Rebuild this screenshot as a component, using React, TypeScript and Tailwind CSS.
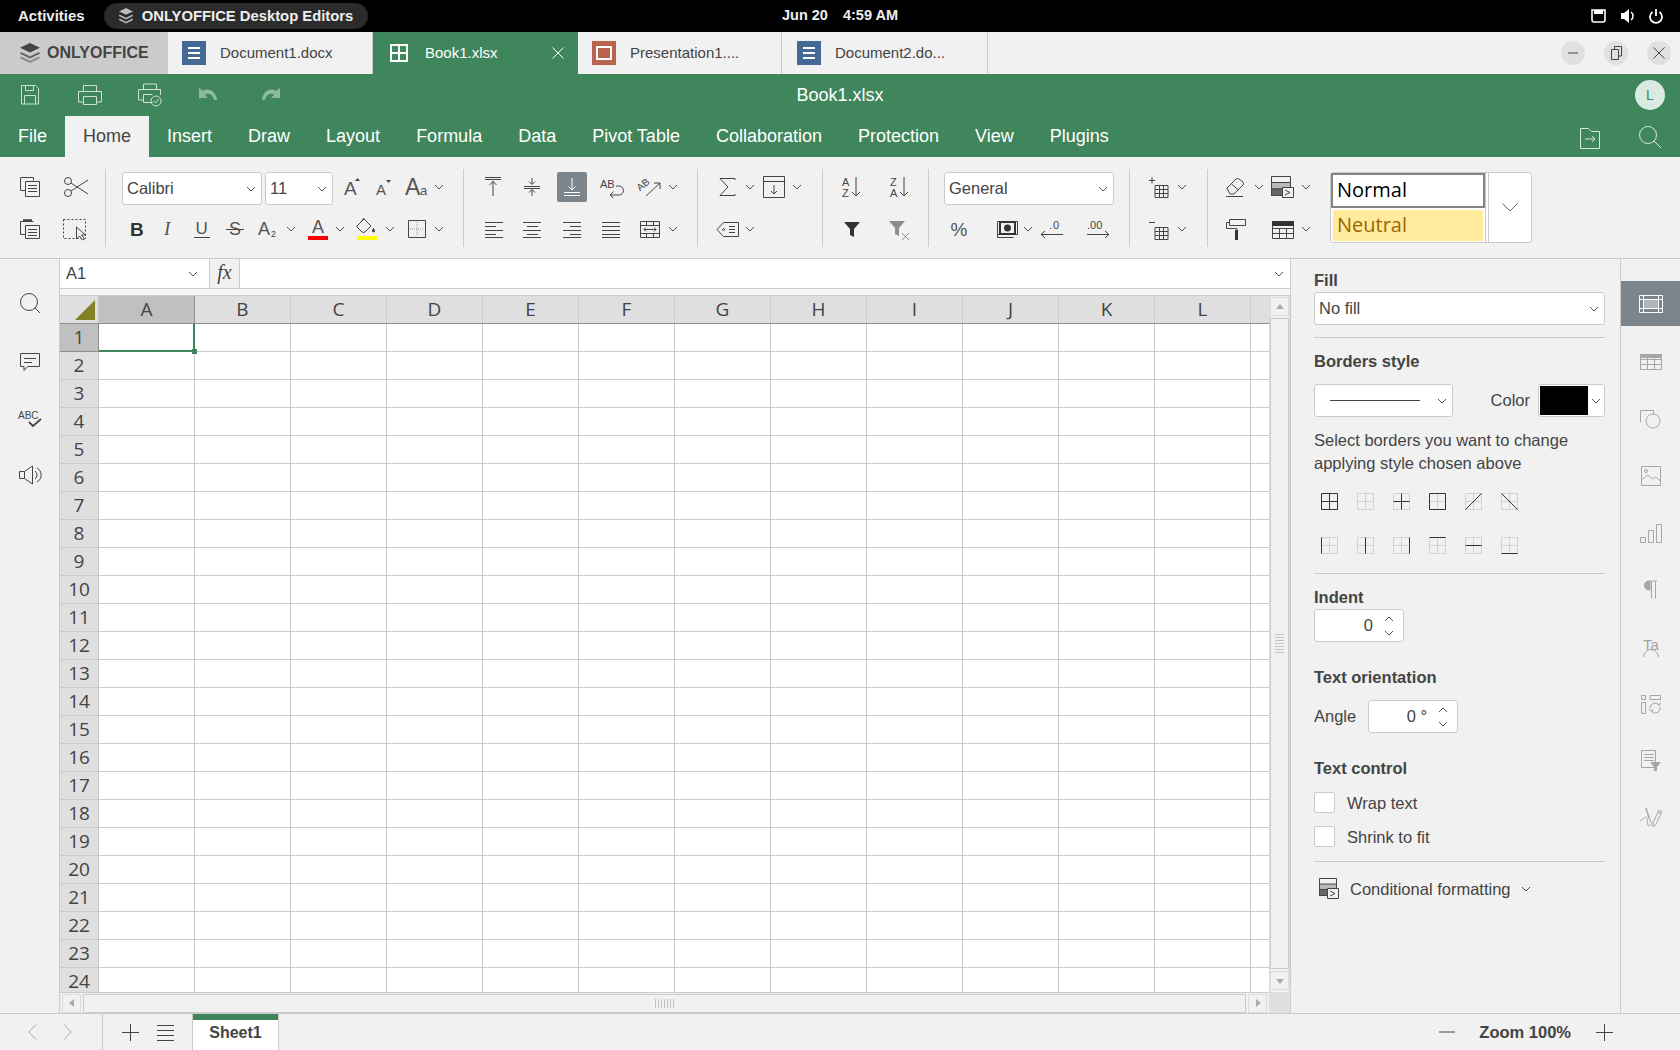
import type { ReactNode } from "react";

const COLS = ["A", "B", "C", "D", "E", "F", "G", "H", "I", "J", "K", "L"];
const ROWS = Array.from({ length: 24 }, (_, i) => i + 1);

function Ic({
  className = "",
  w = 20,
  h = 20,
  stroke = "#444444",
  children,
}: {
  className?: string;
  w?: number;
  h?: number;
  stroke?: string;
  children: ReactNode;
}) {
  return (
    <svg width={w} height={h} viewBox={`0 0 ${w} ${h}`} fill="none" stroke={stroke} className={`shrink-0 overflow-visible ${className}`}>
      {children}
    </svg>
  );
}

function Chev({ className = "", stroke = "#555555" }: { className?: string; stroke?: string }) {
  return (
    <Ic w={10} h={6} stroke={stroke} className={className}>
      <path d="M1 1l4 4 4-4" />
    </Ic>
  );
}

function Select({ className, text, textClass = "" }: { className: string; text: string; textClass?: string }) {
  return (
    <div className={`flex h-[33px] shrink-0 items-center justify-between rounded-[3px] border border-[#cbcbcb] bg-white pl-[4px] pr-[5px] text-[16.5px] text-[#444444] ${className}`}>
      <span className={textClass}>{text}</span>
      <Chev />
    </div>
  );
}

function Sep() {
  return <div className="mt-[12px] h-[78px] w-px shrink-0 bg-[#cbcbcb]" />;
}

function Row({ children, second }: { children: ReactNode; second?: boolean }) {
  return <div className={`flex h-[30px] items-center ${second ? "mt-[12px]" : ""}`}>{children}</div>;
}

function Group({ className, children }: { className: string; children: ReactNode }) {
  return <div className={`shrink-0 pt-[15px] ${className}`}>{children}</div>;
}

function AlignTop() {
  return (
    <>
      <path d="M2 2.500h16" />
      <path d="M2 .5h16" />
      <path d="M10 4v15M6.500 8L10 4.500 13.500 8" />
    </>
  );
}

function DocIcon({ color }: { color: string }) {
  return (
    <svg width={24} height={24} viewBox="0 0 24 24" className="shrink-0">
      <rect width="24" height="24" fill={color} />
      <path d="M6 7h12M6 12h12M6 17h12" stroke="#ffffff" strokeWidth="2" />
    </svg>
  );
}

function TopBar() {
  return (
    <div className="relative flex h-[32px] shrink-0 items-center bg-black text-[14.5px] font-bold text-[#eeeeee]">
      <span className="ml-[18px] text-[15px]">Activities</span>
      <div className="ml-[19px] flex h-[26px] w-[264px] items-center rounded-full bg-[#2b2b2b] pl-[14px]">
        <svg width={16} height={16} viewBox="0 0 16 16" fill="#bbbbbb" className="shrink-0">
          <path d="M8 0l7 3.400-7 3.400-7-3.400zM1.500 6.500L8 9.700l6.500-3.200 .5 1.500L8 11.400 1 8zM1.500 10.500L8 13.700l6.500-3.200 .5 1.500L8 15.400 1 12z" />
        </svg>
        <span className="ml-[8px] whitespace-nowrap text-[14.8px]">ONLYOFFICE Desktop Editors</span>
      </div>
      <div className="absolute left-[782px] top-0 flex h-[32px] items-center">
        <span>Jun 20</span>
        <span className="ml-[15px]">4:59 AM</span>
      </div>
      <div className="ml-auto flex items-center pr-[17px]">
        <svg width={15} height={14} viewBox="0 0 15 14" fill="none" className="shrink-0">
          <path d="M1 1h13v10a2 2 0 0 1-2 2H3a2 2 0 0 1-2-2z" stroke="#ffffff" strokeWidth="1.600" />
          <path d="M3 1h9v4H3z" fill="#ffffff" />
        </svg>
        <svg width={16} height={16} viewBox="0 0 16 16" className="ml-[14px] shrink-0">
          <path d="M1 5h3l5-4v14l-5-4H1z" fill="#ffffff" />
          <path d="M11 4a5 5 0 0 1 0 8" stroke="#ffffff" strokeWidth="1.500" fill="none" />
        </svg>
        <svg width={14} height={15} viewBox="0 0 14 15" fill="none" stroke="#ffffff" strokeWidth="1.800" className="ml-[13px] shrink-0">
          <path d="M7 0v7M3.500 3a6 6 0 1 0 7 0" />
        </svg>
      </div>
    </div>
  );
}

function TabsBar() {
  return (
    <div className="flex h-[42px] shrink-0 bg-[#f1f1f1] text-[15px] text-[#444444]">
      <div className="flex w-[168px] items-center bg-[#cbcbcb] pl-[19px]">
        <svg width={22} height={22} viewBox="0 0 22 22" className="shrink-0">
          <path d="M11 1l10 4.800-10 4.800L1 5.800z" fill="#444444" />
          <path d="M2 10l9 4.300L20 10l1 1.700-10 4.800-10-4.800z" fill="#666666" />
          <path d="M2 14.500l9 4.300 9-4.300 1 1.700-10 4.800-10-4.800z" fill="#8a8a8a" />
        </svg>
        <span className="ml-[6px] text-[16px] font-bold">ONLYOFFICE</span>
      </div>
      <div className="flex w-[205px] items-center border-r border-[#cbcbcb] pl-[14px]">
        <DocIcon color="#446995" />
        <span className="ml-[14px]">Document1.docx</span>
      </div>
      <div className="flex w-[205px] items-center bg-[#40865c] pl-[17px] text-white">
        <svg width={18} height={18} viewBox="0 0 18 18" fill="none" stroke="#ffffff" strokeWidth="2" className="shrink-0">
          <path d="M1 1h16v16H1zM9 1v16M1 9h16" />
        </svg>
        <span className="ml-[17px]">Book1.xlsx</span>
        <svg width={12} height={12} viewBox="0 0 12 12" stroke="#ffffff" className="ml-[54px] shrink-0">
          <path d="M.5.500l11 11M11.500.500l-11 11" />
        </svg>
      </div>
      <div className="flex w-[204px] items-center border-r border-[#cbcbcb] pl-[14px]">
        <svg width={24} height={24} viewBox="0 0 24 24" className="shrink-0">
          <rect width="24" height="24" fill="#b7634e" />
          <rect x="5" y="6" width="14" height="12" fill="none" stroke="#ffffff" strokeWidth="2" />
        </svg>
        <span className="ml-[14px]">Presentation1....</span>
      </div>
      <div className="flex w-[206px] items-center border-r border-[#cbcbcb] pl-[15px]">
        <DocIcon color="#446995" />
        <span className="ml-[14px]">Document2.do...</span>
      </div>
      <div className="ml-auto flex items-center pr-[9px]">
        <div className="flex h-[24px] w-[24px] items-center justify-center rounded-full bg-[#e0e0e0]">
          <Ic w={10} h={2}>
            <path d="M0 1h10" />
          </Ic>
        </div>
        <div className="ml-[19px] flex h-[24px] w-[24px] items-center justify-center rounded-full bg-[#e0e0e0]">
          <Ic w={11} h={14}>
            <path d="M3.500 3V.5h7v9.500H8M.5 3.500h7v10h-7z" />
          </Ic>
        </div>
        <div className="ml-[19px] flex h-[24px] w-[24px] items-center justify-center rounded-full bg-[#e0e0e0]">
          <Ic w={12} h={12}>
            <path d="M.5.500l11 11M11.500.500l-11 11" />
          </Ic>
        </div>
      </div>
    </div>
  );
}

function GreenHeader() {
  const tabs = ["Insert", "Draw", "Layout", "Formula", "Data", "Pivot Table", "Collaboration", "Protection", "View", "Plugins"];
  return (
    <div className="h-[83px] shrink-0 bg-[#40865c] text-white">
      <div className="relative flex h-[42px] items-center">
        <Ic stroke="#cfe1d6" className="ml-[20px]">
          <path d="M1.500.5h14l3 3v15.500h-17zM5.500.5v5h8v-5M4.500 19v-8.500h11V19" />
        </Ic>
        <Ic w={24} stroke="#cfe1d6" className="ml-[38px]">
          <path d="M5.500 6V.5h13V6M5.500 17H.5V6.500h23V17h-5M5.500 11.500h13v8h-13z" />
        </Ic>
        <Ic w={24} h={24} stroke="#cfe1d6" className="ml-[36px]">
          <path d="M5.500 6V1h13v5M5.500 17H.5V6.500h22V12M5.500 11.500h9M5.500 11.500v8h9" />
          <circle cx="18" cy="18" r="5" />
          <path d="M15.500 18l2 2 3-4" />
        </Ic>
        <svg width={20} height={14} viewBox="0 0 20 14" fill="#8fb9a0" className="ml-[37px] shrink-0">
          <path d="M0 0v10h9L6 7c2-2 7-2 9 5h3C17 3 9-1 4 3z" />
        </svg>
        <svg width={20} height={14} viewBox="0 0 20 14" fill="#8fb9a0" className="ml-[41px] shrink-0 -scale-x-100">
          <path d="M0 0v10h9L6 7c2-2 7-2 9 5h3C17 3 9-1 4 3z" />
        </svg>
        <span className="absolute left-0 right-0 text-center text-[18px]">Book1.xlsx</span>
        <div className="ml-auto mr-[15px] flex h-[30px] w-[30px] items-center justify-center rounded-full bg-[#d9ebe0] text-[14px] text-[#40865c]">L</div>
      </div>
      <div className="flex h-[41px] items-stretch pl-[18px] text-[18px]">
        <span className="flex items-center">File</span>
        <span className="ml-[18px] flex items-center bg-[#f1f1f1] px-[18px] text-[#444444]">Home</span>
        {tabs.map((t) => (
          <span key={t} className="ml-[18px] mr-[18px] flex items-center whitespace-nowrap">
            {t}
          </span>
        ))}
        <div className="ml-auto flex items-center pr-[18px]">
          <Ic w={20} h={24} stroke="#d6e6dc">
            <path d="M.5 3.500h8l3 3h8v17H.5zM5 14h10M12 11l3 3-3 3" />
          </Ic>
          <Ic w={24} h={24} stroke="#d6e6dc" className="ml-[38px]">
            <circle cx="10" cy="10" r="8.500" />
            <path d="M16 16l7 7" />
          </Ic>
        </div>
      </div>
    </div>
  );
}

function Toolbar() {
  return (
    <div className="flex h-[102px] shrink-0 border-b border-[#cbcbcb] bg-[#f1f1f1] font-['Liberation_Sans',sans-serif]">
      <Group className="w-[105px]">
        <Row>
          <Ic className="ml-[20px]">
            <path d="M.5.500h13v3M.5.500v13h4.500M5.500 4.500h14v15h-14zM8 8.500h9M8 11.500h9M8 14.500h9" />
          </Ic>
          <Ic w={24} className="ml-[24px]">
            <circle cx="4" cy="4" r="3.500" />
            <circle cx="4" cy="16" r="3.500" />
            <path d="M7 6l17 11M7 14L24 3" />
          </Ic>
        </Row>
        <Row second>
          <Ic className="ml-[20px]">
            <path d="M.5 2.500h13M.5 2.500v13h4.500M5.500 6.500h14v13h-14zM8 10.500h9M8 13.500h9M8 16.500h9" />
            <path d="M3 1.500h9" strokeWidth="2.500" />
          </Ic>
          <Ic w={24} className="ml-[23px]">
            <path d="M.5.500h22v19H.5z" strokeDasharray="2 2" />
            <path d="M13.500 8v12l3-3 3 4 2-1-3-4h4z" fill="#f1f1f1" />
          </Ic>
        </Row>
      </Group>
      <Sep />
      <Group className="w-[357px]">
        <Row>
          <Select className="ml-[16px] w-[140px] self-start" text="Calibri" />
          <Select className="ml-[3px] w-[68px] self-start" text="11" />
          <Ic className="ml-[8px]">
            <text x="3" y="18" fontSize="19" fill="#555555" stroke="none">A</text>
            <path d="M14 4h5l-2.500-3z" fill="#444444" stroke="none" />
          </Ic>
          <Ic className="ml-[12px]">
            <text x="3" y="18" fontSize="15" fill="#555555" stroke="none">A</text>
            <path d="M13 3h5l-2.500 3z" fill="#444444" stroke="none" />
          </Ic>
          <Ic w={24} className="ml-[12px]">
            <text x="0" y="18" fontSize="23" fill="#555555" stroke="none">A</text>
            <text x="15" y="18" fontSize="13" fill="#555555" stroke="none">a</text>
          </Ic>
          <Chev className="ml-[5px]" />
        </Row>
        <Row second>
          <Ic className="ml-[21px]">
            <text x="3" y="17" fontSize="19" fontWeight="700" fill="#333333" stroke="none">B</text>
          </Ic>
          <Ic className="ml-[12px]">
            <text x="5" y="16" fontSize="19" fontStyle="italic" fontFamily="'Liberation Serif', serif" fill="#555555" stroke="none">I</text>
          </Ic>
          <Ic className="ml-[13px]">
            <text x="3.500" y="15" fontSize="17" fill="#555555" stroke="none">U</text>
            <path d="M2 18.500h16" />
          </Ic>
          <Ic className="ml-[13px]">
            <text x="4" y="16" fontSize="18" fill="#555555" stroke="none">S</text>
            <path d="M1 10.500h18" />
          </Ic>
          <Ic className="ml-[13px]">
            <text x="0" y="16" fontSize="18" fill="#555555" stroke="none">A</text>
            <text x="13" y="18" fontSize="9" fill="#444444" stroke="none">2</text>
          </Ic>
          <Chev className="ml-[8px]" />
          <Ic h={24} className="ml-[12px]">
            <text x="4" y="16" fontSize="18" fill="#555555" stroke="none">A</text>
            <rect x="0" y="19" width="20" height="4" fill="#ff0000" stroke="none" />
          </Ic>
          <Chev className="ml-[7px]" />
          <Ic w={24} h={24} className="ml-[10px]">
            <path d="M2 9l7-7 7 7-6 6q-1.500 1-3 0l-5-5zM6 5l3-4" />
            <path d="M18.500 11c1.500 2 2 3 1 4a1.500 1.500 0 0 1-2 0c-1-1-.5-2 1-4z" fill="#444444" stroke="none" />
            <rect x="2" y="19" width="20" height="4" fill="#ffff00" stroke="none" />
          </Ic>
          <Chev className="ml-[6px]" />
          <Ic className="ml-[12px]">
            <path d="M1.500 1.500h17v17h-17z" />
            <path d="M10 3v14M3 10h14" stroke="#999999" strokeDasharray="1 1" />
          </Ic>
          <Chev className="ml-[7px]" />
        </Row>
      </Group>
      <Sep />
      <Group className="w-[233px]">
        <Row>
          <Ic className="ml-[19px]">
            <AlignTop />
          </Ic>
          <Ic className="ml-[19px]">
            <path d="M2 9.500h16M2 11.500h16M10 1v6M7 4.500l3 3 3-3M10 19v-6M7 15.500l3-3 3 3" />
          </Ic>
          <div className="ml-[15px] flex h-[30px] w-[30px] items-center justify-center rounded-[2px] bg-[#7d858c]">
            <Ic stroke="#ffffff">
              <path d="M2 15.500h16M2 18.500h16M10 1v12M6.500 9.500l3.500 3.500 3.500-3.500" />
            </Ic>
          </div>
          <Ic w={24} className="ml-[13px]">
            <text x="0" y="11" fontSize="11" fill="#444444" stroke="none">AB</text>
            <path d="M16 9h3a4 4 0 0 1 0 9H10M13.500 14.500L10 18l3.500 3" />
          </Ic>
          <Ic w={24} className="ml-[14px]">
            <text x="0" y="11" fontSize="10" fill="#444444" stroke="none" transform="rotate(-40 6 10)">AB</text>
            <path d="M8 19L22 6M16 6h6v6" />
          </Ic>
          <Chev className="ml-[6px]" />
        </Row>
        <Row second>
          <Ic className="ml-[19px]">
            <path d="M2 3.500h18M2 7.500h11M2 11.500h18M2 15.500h11M2 18.500h18" />
          </Ic>
          <Ic className="ml-[19px]">
            <path d="M1 3.500h18M5 7.500h11M1 11.500h18M5 15.500h11M1 18.500h18" />
          </Ic>
          <Ic className="ml-[20px]">
            <path d="M1 3.500h18M8 7.500h11M1 11.500h18M8 15.500h11M1 18.500h18" />
          </Ic>
          <Ic className="ml-[19px]">
            <path d="M1 3.500h18M1 7.500h18M1 11.500h18M1 15.500h18M1 18.500h18" />
          </Ic>
          <Ic w={24} className="ml-[17px]">
            <path d="M2.500 2.500h19v16h-19zM2.500 6.500h19M2.500 14.500h19M8.500 2.500v4M15.500 2.500v4M8.500 14.500v4M15.500 14.500v4M6 10.500h12M8 8.500l-2 2 2 2M16 8.500l2 2-2 2" />
          </Ic>
          <Chev className="ml-[6px]" />
        </Row>
      </Group>
      <Sep />
      <Group className="w-[124px]">
        <Row>
          <Ic className="ml-[20px]">
            <path d="M17 3V1.500H2L10 10l-8 8.500h15V17" />
          </Ic>
          <Chev className="ml-[7px]" />
          <Ic w={24} h={22} className="ml-[7px]">
            <path d="M1.500.5h21v21h-21zM1.500 5.500h21M12 9v9M9 15l3 3 3-3" />
          </Ic>
          <Chev className="ml-[6px]" />
        </Row>
        <Row second>
          <Ic w={24} className="ml-[18px]">
            <path d="M7.500 3.500h15v14h-15L1 10.500z" />
            <circle cx="7.500" cy="10.500" r="1" />
            <path d="M13 7.500h6M13 10.500h6M13 13.500h6" />
          </Ic>
          <Chev className="ml-[5px]" />
        </Row>
      </Group>
      <Sep />
      <Group className="w-[105px]">
        <Row>
          <Ic h={22} className="ml-[19px]">
            <text x="0" y="10" fontSize="11" fill="#444444" stroke="none">A</text>
            <text x="0" y="21" fontSize="11" fill="#444444" stroke="none">Z</text>
            <path d="M14 1v19M10 16l4 4 4-4" />
          </Ic>
          <Ic h={22} className="ml-[28px]">
            <text x="0" y="10" fontSize="11" fill="#444444" stroke="none">Z</text>
            <text x="0" y="21" fontSize="11" fill="#444444" stroke="none">A</text>
            <path d="M14 1v19M10 16l4 4 4-4" />
          </Ic>
        </Row>
        <Row second>
          <Ic className="ml-[19px]">
            <path d="M2 3h16l-6 7v8l-4-2v-6z" fill="#333333" stroke="none" />
          </Ic>
          <Ic w={22} className="ml-[26px]">
            <path d="M1 2h16l-6 7v8l-4-2V9z" fill="#8c8c8c" stroke="none" />
            <path d="M14 14l7 7M21 14l-7 7" stroke="#8c8c8c" />
          </Ic>
        </Row>
      </Group>
      <Sep />
      <Group className="w-[200px]">
        <Row>
          <Select className="ml-[15px] w-[170px] self-start" text="General" />
        </Row>
        <Row second>
          <div className="ml-[20px] w-[20px] text-center text-[19px] leading-none text-[#555555]">%</div>
          <Ic w={24} className="ml-[25px]">
            <path d="M3.500 14.500v4h16" />
            <path d="M3.500 2.500h20v13h-20z" fill="#f1f1f1" />
            <path d="M6 3h15v12H6z" fill="#f1f1f1" stroke="#333333" strokeWidth="2" />
            <circle cx="13.500" cy="9" r="3.500" fill="#333333" stroke="none" />
          </Ic>
          <Chev className="ml-[5px]" />
          <Ic w={24} className="ml-[7px]">
            <text x="13" y="10" fontSize="11" fill="#444444" stroke="none">0</text>
            <text x="9" y="10" fontSize="11" fill="#444444" stroke="none">.</text>
            <path d="M1 15.500h22M5 12l-4 3.500L5 19" />
          </Ic>
          <Ic w={24} className="ml-[22px]">
            <text x="1" y="10" fontSize="11" fill="#444444" stroke="none">.00</text>
            <path d="M1 15.500h22M19 12l4 3.500-4 3.500" />
          </Ic>
        </Row>
      </Group>
      <Sep />
      <Group className="w-[77px]">
        <Row>
          <Ic w={24} className="ml-[19px]">
            <path d="M6 8.500h13v12H6zM6 12.500h13M6 16.500h13M10.500 8.500v12M14.500 8.500v12M0 3.500h6M3 .5v6" />
          </Ic>
          <Chev className="ml-[4px]" />
        </Row>
        <Row second>
          <Ic w={24} className="ml-[19px]">
            <path d="M6 8.500h13v12H6zM6 12.500h13M6 16.500h13M10.500 8.500v12M14.500 8.500v12M0 3.500h6" />
          </Ic>
          <Chev className="ml-[4px]" />
        </Row>
      </Group>
      <Sep />
      <Group className="w-[122px]">
        <Row>
          <Ic w={24} className="ml-[17px]">
            <path d="M2 11l9-9q1.500-1 3 0l4 3q1 1.500 0 3l-9 9H5zM6.500 7l7 6M1 19.500h17" />
          </Ic>
          <Chev className="ml-[5px]" />
          <Ic w={24} h={22} className="ml-[7px]">
            <path d="M.5.500h19v19H.5z" />
            <path d="M.5 6.500h19V13H.5z" fill="#b8b8b8" />
            <path d="M.5 13h11v6.500H.5z" fill="#666666" />
            <path d="M11.500 11.500h11v10h-11z" fill="#f1f1f1" />
            <path d="M14 14l5 2.500-5 2.500" />
          </Ic>
          <Chev className="ml-[6px]" />
        </Row>
        <Row second>
          <Ic w={24} h={22} className="ml-[17px]">
            <path d="M4.500 1.500h16v6h-16zM4.500 4.500H1.500v6H12v3" />
            <rect x="10" y="12" width="3" height="10" fill="#333333" stroke="none" />
          </Ic>
          <Ic w={24} className="ml-[23px]">
            <path d="M.5 4.500h21v15H.5zM.5 9.500h21M.5 14.500h21M7.500 9.500v10M14.500 9.500v10" />
            <rect x="0" y="2" width="22" height="5" fill="#333333" stroke="none" />
          </Ic>
          <Chev className="ml-[5px]" />
        </Row>
      </Group>
      <div className="mt-[15px] flex h-[71px] w-[202px] shrink-0 rounded-[3px] border border-[#cbcbcb] bg-white font-['Open_Sans',sans-serif] text-[20px]">
        <div className="w-[155px] border-r border-[#cbcbcb]">
          <div className="flex h-[35px] items-center border-[2px] border-[#848484] pb-[2px] pl-[4px] text-black">Normal</div>
          <div className="mx-[2px] mt-[2px] flex h-[31px] items-center bg-[#ffeb9c] pb-[2px] pl-[4px] text-[#9c6500]">Neutral</div>
        </div>
        <div className="ml-[2px] flex flex-1 items-center justify-center border-l border-[#cbcbcb]">
          <Ic w={16} h={9} stroke="#666666">
            <path d="M.5.500L8 8l7.500-7.500" />
          </Ic>
        </div>
      </div>
    </div>
  );
}

function LeftPanel() {
  return (
    <div className="flex w-[60px] shrink-0 flex-col items-center border-r border-[#cbcbcb] bg-[#f1f1f1] pt-[34px]">
      <Ic>
        <circle cx="9" cy="9" r="8.500" />
        <path d="M15 15l5 5" />
      </Ic>
      <Ic className="mt-[39px]">
        <path d="M.5 1.500h19v13H7.500l-3.500 4v-4H.5zM4 6.500h12M4 10.500h8" />
      </Ic>
      <Ic w={24} className="mt-[36px]">
        <text x="0" y="11" fontSize="10" fill="#444444" stroke="none">ABC</text>
        <path d="M11 14l4 4 8-7" strokeWidth="1.800" />
      </Ic>
      <Ic w={22} className="mt-[37px]">
        <path d="M.5 6.500h5l8-5.500v18l-8-5.500h-5zM5.500 6.500v7M16 6a5 5 0 0 1 0 8M18 3a8 8 0 0 1 0 14" />
      </Ic>
    </div>
  );
}

function FormulaBar() {
  return (
    <div className="flex h-[30px] shrink-0 border-b border-[#cbcbcb] bg-white text-[16.5px] text-[#444444]">
      <div className="flex w-[149px] items-center justify-between pl-[6px] pr-[11px]">
        <span>A1</span>
        <Chev />
      </div>
      <div className="flex w-[31px] items-center justify-center border-x border-[#cbcbcb] bg-[#f1f1f1] pb-[3px] font-['Liberation_Serif',serif] text-[20px] italic">
        fx
      </div>
      <div className="flex flex-1 items-center justify-end pr-[6px]">
        <Chev />
      </div>
    </div>
  );
}

function Sheet() {
  return (
    <div className="relative min-w-0 flex-1 overflow-hidden bg-white font-['Open_Sans',sans-serif] text-[19px] text-[#444444]">
      <div className="flex h-[28px] border-b border-[#8f8f8f] bg-[#dfdfdf]">
        <div className="relative w-[39px] shrink-0 border-r border-[#cbcbcb]">
          <svg width={20} height={20} viewBox="0 0 20 20" className="absolute right-[3px] top-[4px]">
            <path d="M20 0v20H0z" fill="#838126" />
          </svg>
        </div>
        {COLS.map((c, i) => (
          <div
            key={c}
            className={`flex w-[96px] shrink-0 items-center justify-center border-r ${i === 0 ? "border-[#8f8f8f] bg-[#c0c0c0]" : "border-[#cbcbcb]"}`}
          >
            {c}
          </div>
        ))}
      </div>
      {ROWS.map((r) => (
        <div key={r} className="flex h-[28px]">
          <div
            className={`flex w-[39px] shrink-0 items-center justify-center border-b border-r ${r === 1 ? "border-[#8f8f8f] bg-[#c0c0c0]" : "border-[#cbcbcb] bg-[#dfdfdf]"}`}
          >
            {r}
          </div>
          {COLS.map((c) => (
            <div key={c} className="w-[96px] shrink-0 border-b border-r border-[#cbcbcb]" />
          ))}
          <div className="flex-1 border-b border-[#cbcbcb]" />
        </div>
      ))}
      <div className="absolute left-[39px] top-[28px] h-[28px] w-[96px] border-b-2 border-r-2 border-[#40865c]" />
      <div className="absolute left-[132px] top-[53px] h-[5px] w-[5px] bg-[#40865c]" />
    </div>
  );
}

function ScrollBtn({ dir }: { dir: "up" | "down" | "left" | "right" }) {
  const path = { up: "M1 7l4-5 4 5z", down: "M1 3l4 5 4-5z", left: "M7 1L2 5l5 4z", right: "M3 1l5 4-5 4z" }[dir];
  return (
    <div className="flex h-[19px] w-[19px] shrink-0 items-center justify-center border border-[#dcdcdc] bg-[#f1f1f1]">
      <svg width={10} height={10} viewBox="0 0 10 10" fill="#aaaaaa">
        <path d={path} />
      </svg>
    </div>
  );
}

function Grid() {
  return (
    <div className="flex min-w-0 flex-1 flex-col">
      <FormulaBar />
      <div className="h-[7px] shrink-0 border-b border-[#cbcbcb] bg-[#f7f7f7]" />
      <div className="flex min-h-0 flex-1">
        <Sheet />
        <div className="flex w-[21px] shrink-0 flex-col items-center border-x border-[#dcdcdc] bg-[#f1f1f1] pb-[2px] pt-[1px]">
          <ScrollBtn dir="up" />
          <div className="my-[2px] flex w-[19px] flex-1 items-center justify-center border border-[#cbcbcb]">
            <div className="h-[20px] w-[9px] bg-[repeating-linear-gradient(#c4c4c4_0_1px,transparent_1px_3px)]" />
          </div>
          <ScrollBtn dir="down" />
        </div>
      </div>
      <div className="flex h-[21px] shrink-0 bg-[#dfdfdf]">
        <div className="flex flex-1 items-center border-t border-[#cbcbcb] bg-[#f1f1f1] px-[2px]">
          <ScrollBtn dir="left" />
          <div className="mx-[2px] flex h-[19px] flex-1 items-center justify-center border border-[#cbcbcb]">
            <div className="h-[9px] w-[20px] bg-[repeating-linear-gradient(90deg,#c4c4c4_0_1px,transparent_1px_3px)]" />
          </div>
          <ScrollBtn dir="right" />
        </div>
        <div className="w-[21px] shrink-0" />
      </div>
    </div>
  );
}

function BorderIcon({ solid }: { solid: string }) {
  return (
    <Ic w={17} h={17}>
      <path d="M.5.500h16v16H.5zM8.500.500v16M.5 8.500h16" stroke="#b4b4b4" strokeDasharray="1 1" />
      <path d={solid} stroke="#333333" />
    </Ic>
  );
}

function Spinner({ className, value }: { className: string; value: string }) {
  return (
    <div className={`flex h-[33px] w-[90px] items-center justify-end rounded-[3px] border border-[#cbcbcb] bg-white pr-[9px] ${className}`}>
      <span>{value}</span>
      <div className="ml-[11px] flex flex-col gap-[8px]">
        <Ic w={10} h={6} stroke="#555555">
          <path d="M1 5l4-4 4 4" />
        </Ic>
        <Chev />
      </div>
    </div>
  );
}

function Panel() {
  return (
    <div className="w-[331px] shrink-0 border-l border-r border-[#cbcbcb] bg-[#f1f1f1] pl-[23px] pr-[15px] pt-[11px] text-[16.5px] text-[#444444]">
      <div className="h-[20px] font-bold leading-[20px]">Fill</div>
      <Select className="mt-[2px] w-full" text="No fill" />
      <div className="mt-[12px] h-px bg-[#cbcbcb]" />
      <div className="mt-[13px] h-[20px] font-bold leading-[20px]">Borders style</div>
      <div className="mt-[13px] flex items-center">
        <div className="flex h-[33px] w-[139px] items-center justify-between rounded-[3px] border border-[#cbcbcb] bg-white pl-[15px] pr-[5px]">
          <div className="h-px w-[90px] bg-[#444444]" />
          <Chev />
        </div>
        <span className="ml-auto">Color</span>
        <div className="ml-[8px] flex h-[33px] w-[67px] items-center rounded-[3px] border border-[#cbcbcb] bg-white pl-px pr-[3px]">
          <div className="h-[29px] w-[48px] bg-black" />
          <Chev className="ml-[3px]" />
        </div>
      </div>
      <div className="mt-[12px] leading-[23px]">
        Select borders you want to change
        <br />
        applying style chosen above
      </div>
      <div className="mt-[18px] flex gap-[19px] pl-[7px]">
        <BorderIcon solid="M.5.500h16v16H.5zM8.500.500v16M.5 8.500h16" />
        <BorderIcon solid="" />
        <BorderIcon solid="M8.500.500v16M.5 8.500h16" />
        <BorderIcon solid="M.5.500h16v16H.5z" />
        <BorderIcon solid="M.5 16.500l16-16" />
        <BorderIcon solid="M.5.500l16 16" />
      </div>
      <div className="mt-[27px] flex gap-[19px] pl-[7px]">
        <BorderIcon solid="M.5.500v16" />
        <BorderIcon solid="M8.500.500v16" />
        <BorderIcon solid="M16.500.500v16" />
        <BorderIcon solid="M.5.500h16" />
        <BorderIcon solid="M.5 8.500h16" />
        <BorderIcon solid="M.5 16.500h16" />
      </div>
      <div className="mt-[19px] h-px bg-[#cbcbcb]" />
      <div className="mt-[13px] h-[20px] font-bold leading-[20px]">Indent</div>
      <Spinner className="mt-[2px]" value="0" />
      <div className="mt-[25px] h-[20px] font-bold leading-[20px]">Text orientation</div>
      <div className="mt-[13px] flex items-center">
        <span>Angle</span>
        <Spinner className="ml-[12px]" value="0 °" />
      </div>
      <div className="mt-[25px] h-[20px] font-bold leading-[20px]">Text control</div>
      <div className="mt-[14px] flex h-[21px] items-center">
        <div className="h-[21px] w-[21px] rounded-[2px] border border-[#cbcbcb] bg-white" />
        <span className="ml-[12px] pt-[2px]">Wrap text</span>
      </div>
      <div className="mt-[13px] flex h-[21px] items-center">
        <div className="h-[21px] w-[21px] rounded-[2px] border border-[#cbcbcb] bg-white" />
        <span className="ml-[12px] pt-[2px]">Shrink to fit</span>
      </div>
      <div className="mt-[14px] h-px bg-[#cbcbcb]" />
      <div className="mt-[15px] flex h-[24px] items-center pl-[5px]">
        <Ic w={20} h={22}>
          <path d="M.5.500h17v17H.5z" />
          <path d="M.5 6h17v5.500H.5z" fill="#b8b8b8" />
          <path d="M.5 11.500h9v6h-9z" fill="#666666" />
          <path d="M8.500 10.500h11v10h-11z" fill="#f1f1f1" />
          <path d="M11 13l5 2.500-5 2.500" />
        </Ic>
        <span className="ml-[11px]">Conditional formatting</span>
        <Chev className="ml-[10px]" />
      </div>
    </div>
  );
}

function RailItem({ children }: { children: ReactNode }) {
  return <div className="flex h-[57px] items-center justify-center">{children}</div>;
}

function Rail() {
  const gray = "#a6a6a6";
  return (
    <div className="w-[59px] shrink-0 bg-[#f1f1f1] pt-[22px]">
      <div className="flex h-[45px] items-center justify-center bg-[#7d858c]">
        <Ic w={24} h={18} stroke="#ffffff">
          <rect x="4" y="4" width="16" height="10" fill="#b0b5ba" stroke="none" />
          <path d="M.5.500h23v17H.5zM.5 4.500h23M.5 13.500h23M4.500.500v17M19.500.500v17" />
        </Ic>
      </div>
      <div className="mt-[7px]">
        <RailItem>
          <Ic w={22} h={16} stroke={gray}>
            <rect width="22" height="4" fill={gray} stroke="none" />
            <path d="M.5.500h21v15H.5zM.5 5.500h21M.5 10.500h21M7.500 4v11M14.500 4v11" />
          </Ic>
        </RailItem>
        <RailItem>
          <Ic w={22} stroke={gray}>
            <path d="M.5 13.500V1.500h13v4" />
            <circle cx="13" cy="12" r="7" />
          </Ic>
        </RailItem>
        <RailItem>
          <Ic w={20} stroke={gray}>
            <path d="M.5.500h19v19H.5zM.5 14l6-5 5 4 3-2 5 4" />
            <circle cx="5" cy="5" r="1.500" />
          </Ic>
        </RailItem>
        <RailItem>
          <Ic w={22} stroke={gray}>
            <path d="M.5 14.500h5v5h-5zM8.500 7.500h5v12h-5zM16.500 1.500h5v18h-5z" />
          </Ic>
        </RailItem>
        <RailItem>
          <Ic w={14} h={18} stroke={gray}>
            <path d="M6 9H5a4.500 4.500 0 0 1 0-9h1z" fill={gray} />
            <path d="M6 0h7M7.500 .5v17M11.500 .5v17" />
          </Ic>
        </RailItem>
        <RailItem>
          <Ic w={16} h={22} stroke={gray}>
            <text x="0" y="14" fontSize="15" fill={gray} stroke="none">Ta</text>
            <path d="M.5 21a7 7 0 0 1 15 0" />
          </Ic>
        </RailItem>
        <RailItem>
          <Ic w={20} stroke={gray}>
            <path d="M.5 1.500h4v4h-4zM.5 8.500h4v11h-4zM9 1.500h10.500v4H9zM9 14a5 5 0 0 1 9-3M19 13a5 5 0 0 1-8 5M16 9.500l2.500 2 1-3M8 15l3 3 1-3" />
          </Ic>
        </RailItem>
        <RailItem>
          <Ic w={20} h={22} stroke={gray}>
            <path d="M.5.500h14v17H.5zM3 4.500h10M3 7.500h10M3 10.500h10" />
            <path d="M9 12h11l-4 5v4h-3v-4z" fill={gray} stroke="none" />
          </Ic>
        </RailItem>
        <RailItem>
          <Ic w={24} h={22} stroke={gray}>
            <path d="M1 14c3-2 8-5 8-6s-3-6-2-7 3 12 5 14-1 5-3 3 0-9 2-9" />
            <path d="M14 16l6-13 3 1.500-6 13-3 2.500zM19 5l3 1.500" />
          </Ic>
        </RailItem>
      </div>
    </div>
  );
}

function StatusBar() {
  return (
    <div className="flex h-[37px] shrink-0 items-stretch border-t border-[#cbcbcb] bg-[#f1f1f1] text-[16px] font-bold text-[#444444]">
      <div className="flex w-[103px] items-center border-r border-[#cbcbcb] pl-[28px]">
        <Ic w={9} h={16} stroke="#aaaaaa">
          <path d="M8 .5L1 8l7 7.500" />
        </Ic>
        <Ic w={9} h={16} stroke="#aaaaaa" className="ml-[26px]">
          <path d="M1 .5L8 8l-7 7.500" />
        </Ic>
      </div>
      <div className="flex w-[90px] items-center border-r border-[#cbcbcb] pl-[19px]">
        <Ic w={17} h={17}>
          <path d="M8.500 0v17M0 8.500h17" />
        </Ic>
        <Ic w={17} h={17} className="ml-[18px]">
          <path d="M0 1.500h17M0 6.500h17M0 11.500h17M0 16.500h17" />
        </Ic>
      </div>
      <div className="relative flex w-[86px] items-center justify-center border-r border-[#cbcbcb] bg-white pt-[2px]">
        <div className="absolute left-0 right-0 top-0 h-[6px] bg-[#40865c]" />
        Sheet1
      </div>
      <div className="ml-auto flex items-center pr-[67px]">
        <Ic w={16} h={2}>
          <path d="M0 1h16" />
        </Ic>
        <span className="ml-[24px] text-[16.5px]">Zoom 100%</span>
        <Ic w={17} h={17} className="ml-[25px]">
          <path d="M8.500 0v17M0 8.500h17" />
        </Ic>
      </div>
    </div>
  );
}

export default function App() {
  return (
    <div className="flex h-[1050px] w-[1680px] flex-col overflow-hidden bg-[#f1f1f1] font-['Liberation_Sans',sans-serif]">
      <TopBar />
      <TabsBar />
      <GreenHeader />
      <Toolbar />
      <div className="flex min-h-0 flex-1">
        <LeftPanel />
        <Grid />
        <Panel />
        <Rail />
      </div>
      <StatusBar />
    </div>
  );
}
